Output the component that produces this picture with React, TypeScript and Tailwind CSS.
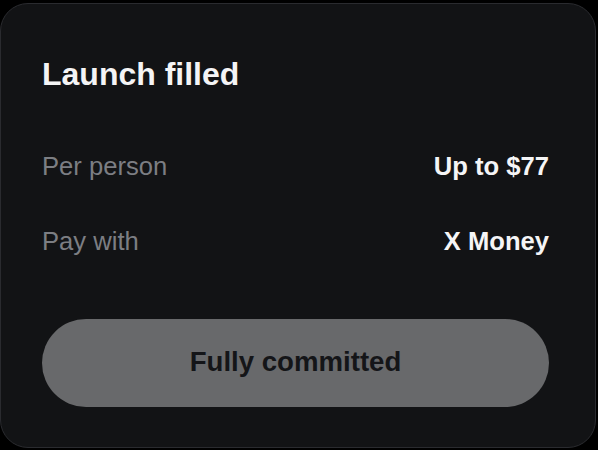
import React from 'react';

const rows = [
  { label: 'Per person', value: 'Up to $77' },
  { label: 'Pay with', value: 'X Money' },
];

const App: React.FC = () => {
  return (
    <div className="w-[598px] h-[450px] bg-black pt-[3px] overflow-hidden" style={{ fontFamily: '"Liberation Sans", Arial, sans-serif' }}>
      <div className="w-[596px] h-[445px] bg-[#121315] border border-[#2a2b2f] rounded-[28px] pl-[41px] pr-[46px] pt-[54px] pb-[40px] flex flex-col">
        <h2 className="text-[32px] leading-none font-bold text-[#f4f4f5]">Launch filled</h2>

        <div className="mt-[64px] flex flex-col gap-[49px]">
          {rows.map((row) => (
            <div key={row.label} className="flex items-center justify-between text-[25.6px] leading-none">
              <span className="text-[#7c7e83]">{row.label}</span>
              <span className="font-bold text-[#f5f5f6]">{row.value}</span>
            </div>
          ))}
        </div>

        <button className="mt-[65px] h-[88px] w-full rounded-full bg-[#68696b] text-[#141518] text-[27.6px] leading-none font-bold pb-[2px]">
          Fully committed
        </button>
      </div>
    </div>
  );
};

export default App;
